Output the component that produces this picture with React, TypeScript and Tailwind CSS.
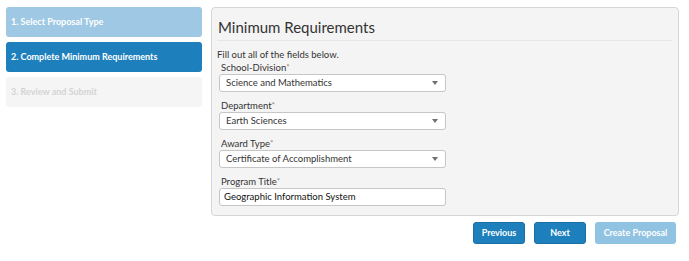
import React from "react";

const font = { fontFamily: 'Lato, "Open Sans", sans-serif' };

function Caret() {
  return (
    <svg width="6" height="4" viewBox="0 0 6 4" className="shrink-0">
      <path d="M0 0 L6 0 L3 4 Z" fill="#707070" />
    </svg>
  );
}

function Label({ text }: { text: string }) {
  return (
    <label className="h-[12px] flex items-end text-[9.5px] leading-[11px] text-[#333] pl-[2px]">
      <span>
        {text}
        <span className="text-[#888] text-[8px] relative top-[-1px]">*</span>
      </span>
    </label>
  );
}

function Select({ label, value }: { label: string; value: string }) {
  return (
    <div className="flex flex-col">
      <Label text={label} />
      <div className="w-[227px] h-[18px] border border-[#c6c6c6] rounded-[3px] bg-white flex items-center justify-between pl-[6px] pr-[7px]">
        <span className="text-[9.5px] text-[#333]">{value}</span>
        <Caret />
      </div>
    </div>
  );
}

export default function App() {
  return (
    <div className="w-[689px] h-[261px] bg-white flex pt-[7px] pl-[6px]" style={font}>
      <div className="w-[196px] flex flex-col gap-[5px] shrink-0">
        <div className="h-[30px] rounded-[3px] bg-[#9ec8e3] text-white text-[9px] font-bold flex items-center pl-[5px]">
          1. Select Proposal Type
        </div>
        <div className="h-[30px] rounded-[3px] bg-[#1e7fbd] text-white text-[9px] font-bold flex items-center pl-[5px]">
          2. Complete Minimum Requirements
        </div>
        <div className="h-[30px] rounded-[3px] bg-[#f5f5f5] text-[#d4d4d4] text-[9px] font-bold flex items-center pl-[5px]">
          3. Review and Submit
        </div>
      </div>
      <div className="ml-[9px] flex flex-col">
        <div className="w-[468px] h-[209px] bg-[#f4f4f4] border border-[#d6d6d6] rounded-[4px] pl-[5px] pr-[6px]">
          <div className="h-[33px] flex items-end pb-[4px] border-b border-[#e6e6e6]">
            <h1 className="text-[15px] leading-[18px] text-[#333] pl-[1px]">Minimum Requirements</h1>
          </div>
          <p className="text-[9.5px] text-[#333] mt-[8px] leading-[11px]">Fill out all of the fields below.</p>
          <div className="flex flex-col gap-[8px] mt-[2px] pl-[2px]">
            <Select label="School-Division" value="Science and Mathematics" />
            <Select label="Department" value="Earth Sciences" />
            <Select label="Award Type" value="Certificate of Accomplishment" />
            <div className="flex flex-col">
              <Label text="Program Title" />
              <div className="w-[227px] h-[18px] border border-[#c6c6c6] rounded-[3px] bg-white flex items-center pl-[4px]">
                <span className="text-[9.5px] text-[#111]">Geographic Information System</span>
              </div>
            </div>
          </div>
        </div>
        <div className="flex justify-end gap-[9px] mt-[6px] pr-[3px]">
          <button className="w-[52px] h-[22px] rounded-[3px] bg-[#1e7fbd] border border-[#1a6fa6] text-white text-[9px] font-bold">
            Previous
          </button>
          <button className="w-[52px] h-[22px] rounded-[3px] bg-[#1e7fbd] border border-[#1a6fa6] text-white text-[9px] font-bold">
            Next
          </button>
          <button className="w-[81px] h-[22px] rounded-[3px] bg-[#90c2e2] text-white text-[9px] font-bold">
            Create Proposal
          </button>
        </div>
      </div>
    </div>
  );
}
